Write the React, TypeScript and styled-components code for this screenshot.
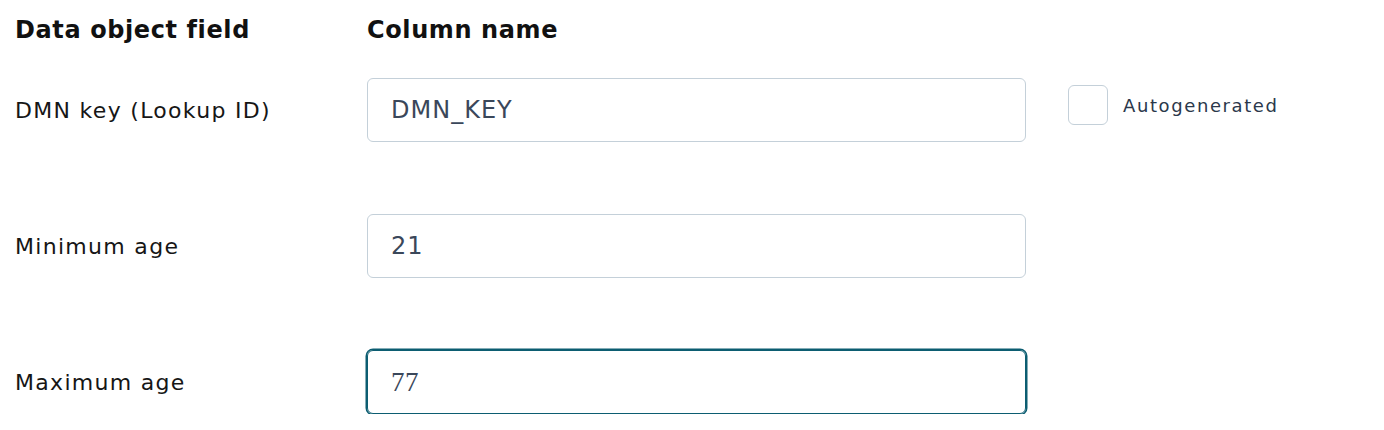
import React from 'react'
import styled, { createGlobalStyle } from 'styled-components'

const GlobalStyle = createGlobalStyle`
    body {
        margin: 0;
        background: #fff;
        font-family: 'DejaVu Sans', 'Open Sans', sans-serif;
    }
`

const fields = [
    { label: 'DMN key (Lookup ID)', value: 'DMN_KEY', autogen: true },
    { label: 'Minimum age', value: '21' },
    { label: 'Maximum age', value: '77', focused: true },
]

const App = () => {
    return (
        <Page>
            <GlobalStyle />
            <HeaderRow>
                <HeaderCell>Data object field</HeaderCell>
                <HeaderCell>Column name</HeaderCell>
            </HeaderRow>
            <Rows>
                {fields.map((f) => (
                    <FieldRow key={f.label}>
                        <Label>{f.label}</Label>
                        <Input focused={f.focused}>
                            {f.focused ? (
                                <TypedValue>{f.value}</TypedValue>
                            ) : (
                                f.value
                            )}
                        </Input>
                        {f.autogen && (
                            <CheckWrap>
                                <Checkbox />
                                <CheckLabel>Autogenerated</CheckLabel>
                            </CheckWrap>
                        )}
                    </FieldRow>
                ))}
            </Rows>
        </Page>
    )
}

export default App

const Page = styled.div`
    padding: 16px 0 0 15px;
`

const HeaderRow = styled.div`
    display: grid;
    grid-template-columns: 352px 1fr;
    height: 29px;
    align-items: center;
`

const HeaderCell = styled.div`
    font-size: 24px;
    font-weight: 700;
    letter-spacing: 0.6px;
    color: #111;
    line-height: 29px;
`

const Rows = styled.div`
    display: flex;
    flex-direction: column;
    gap: 72px;
    margin-top: 33px;
`

const FieldRow = styled.div`
    display: grid;
    grid-template-columns: 352px 659px auto;
    align-items: center;
    height: 64px;
`

const Label = styled.div`
    font-size: 22px;
    letter-spacing: 1.3px;
    color: #161616;
`

const Input = styled.div<{ focused?: boolean }>`
    box-sizing: border-box;
    height: 64px;
    display: flex;
    align-items: center;
    padding-left: 23px;
    border: 1.5px solid ${({ focused }) => (focused ? '#0c5d71' : '#c4d0d9')};
    box-shadow: ${({ focused }) => (focused ? '0 0 0 1.5px #0c5d71' : 'none')};
    border-radius: 6px;
    font-size: 24px;
    letter-spacing: 1px;
    color: #3a475a;
`

const TypedValue = styled.span`
    font-family: 'Liberation Serif', serif;
    font-size: 27px;
    letter-spacing: 0.5px;
    color: #3a475a;
`

const CheckWrap = styled.div`
    display: flex;
    align-items: center;
    gap: 15px;
    margin-left: 42px;
    align-self: start;
    margin-top: 7px;
`

const Checkbox = styled.div`
    box-sizing: border-box;
    width: 40px;
    height: 40px;
    border: 1.5px solid #c4d0d9;
    border-radius: 6px;
    background: #fff;
`

const CheckLabel = styled.span`
    font-size: 18px;
    letter-spacing: 1.6px;
    color: #2b384b;
`
